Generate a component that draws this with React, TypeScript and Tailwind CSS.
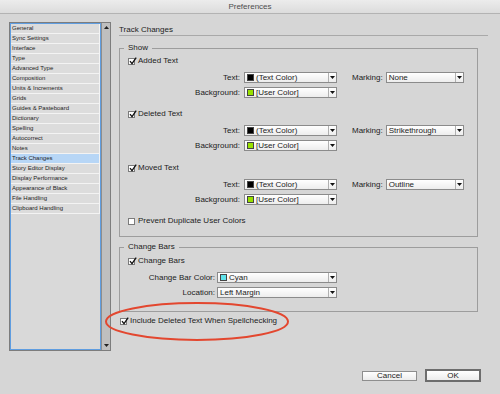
import React from "react";

const PANES = [
  "General",
  "Sync Settings",
  "Interface",
  "Type",
  "Advanced Type",
  "Composition",
  "Units & Increments",
  "Grids",
  "Guides & Pasteboard",
  "Dictionary",
  "Spelling",
  "Autocorrect",
  "Notes",
  "Track Changes",
  "Story Editor Display",
  "Display Performance",
  "Appearance of Black",
  "File Handling",
  "Clipboard Handling",
];

const Check = ({ checked }: { checked?: boolean }) => (
  <span className="relative block w-[7px] h-[7px] shrink-0 border border-[#7b7b7b] bg-white">
    {checked && (
      <svg
        className="absolute left-[0px] top-[-2px]"
        width="8"
        height="8"
        viewBox="0 0 8 8"
      >
        <path d="M1 4.2 L3 6.6 L7.2 0.6" stroke="#111" strokeWidth="1.3" fill="none" />
      </svg>
    )}
  </span>
);

const CheckRow = ({
  label,
  checked,
  className = "",
}: {
  label: string;
  checked?: boolean;
  className?: string;
}) => (
  <div className={`flex items-center gap-[3px] h-[10px] ${className}`}>
    <Check checked={checked} />
    <span className="leading-[10px]">{label}</span>
  </div>
);

const Select = ({
  value,
  swatch,
  className,
}: {
  value: string;
  swatch?: string;
  className: string;
}) => (
  <div
    className={`flex h-[11px] border border-[#8b8b8b] bg-gradient-to-b from-white to-[#ededed] ${className}`}
  >
    <div className="flex flex-1 items-center gap-[2px] pl-[2px] overflow-hidden">
      {swatch && (
        <span className={`block w-[7px] h-[7px] shrink-0 border border-[#444] ${swatch}`} />
      )}
      <span className="leading-[9px] whitespace-nowrap">{value}</span>
    </div>
    <div className="flex w-[8px] items-center justify-center border-l border-[#b0b0b0]">
      <svg width="5" height="3" viewBox="0 0 5 3">
        <path d="M0 0 H5 L2.5 3 Z" fill="#111" />
      </svg>
    </div>
  </div>
);

const Field = ({
  label,
  labelW,
  children,
  className = "",
}: {
  label: string;
  labelW: string;
  children: React.ReactNode;
  className?: string;
}) => (
  <div className={`flex items-center h-[11px] ${className}`}>
    <span className={`${labelW} shrink-0 text-right leading-[10px]`}>{label}</span>
    {children}
  </div>
);

const Marking = ({ value }: { value: string }) => (
  <>
    <span className="ml-[15px] mr-[3px] leading-[10px]">Marking:</span>
    <Select value={value} className="w-[78px]" />
  </>
);

const Section = ({
  title,
  marking,
  className = "",
}: {
  title: string;
  marking: string;
  className?: string;
}) => (
  <div className={className}>
    <CheckRow label={title} checked />
    <Field label="Text:" labelW="w-[116px] pr-[4px]" className="mt-[6px]">
      <Select value="(Text Color)" swatch="bg-black" className="w-[93px]" />
      <Marking value={marking} />
    </Field>
    <Field label="Background:" labelW="w-[116px] pr-[4px]" className="mt-[4px]">
      <Select value="[User Color]" swatch="bg-[#98e000]" className="w-[93px]" />
    </Field>
  </div>
);

export default function App() {
  return (
    <div className="relative w-[500px] h-[394px] overflow-hidden bg-[#d6d6d6] text-[8px] text-[#1c1c1c] font-['Liberation_Sans',Arial,sans-serif]">
      <div className="flex h-[14px] items-center justify-center border-b border-[#b3b3b3] bg-gradient-to-b from-[#ececec] to-[#dcdcdc] text-[#4d4d4d]">
        Preferences
      </div>

      <div className="flex pt-[8px] pl-[9px]">
        <div className="flex w-[102px] h-[329px] border border-[#7d7d7d]">
          <ul className="flex-1 border border-[#5f9de0] bg-[#d9d9d9] text-[6px]">
            {PANES.map((p) => (
              <li
                key={p}
                className={`h-[10px] pl-[1px] leading-[9px] border-b border-r border-[#f3f3f3] whitespace-nowrap ${
                  p === "Track Changes" ? "bg-[#b7d6f6]" : "bg-[#dcdcdc]"
                }`}
              >
                {p}
              </li>
            ))}
          </ul>
          <div className="flex w-[9px] flex-col items-center justify-between border-l border-[#8d8d8d] bg-[#bfbfbf] py-[3px]">
            <svg width="5" height="3" viewBox="0 0 5 3">
              <path d="M0 3 H5 L2.5 0 Z" fill="#222" />
            </svg>
            <svg width="5" height="3" viewBox="0 0 5 3">
              <path d="M0 0 H5 L2.5 3 Z" fill="#222" />
            </svg>
          </div>
        </div>

        <div className="ml-[8px] w-[369px]">
          <div className="mt-[3px] h-[11px] border-b border-[#a9a9a9] leading-[10px]">
            Track Changes
          </div>

          <fieldset className="mt-[7px] w-[359px] border border-[#9d9d9d] pb-[10px]">
            <legend className="ml-[4px] px-[4px] leading-[10px]">Show</legend>
            <div className="px-[8px]">
              <Section title="Added Text" marking="None" className="mt-[3px]" />
              <Section title="Deleted Text" marking="Strikethrough" className="mt-[11px]" />
              <Section title="Moved Text" marking="Outline" className="mt-[12px]" />
              <CheckRow label="Prevent Duplicate User Colors" className="mt-[11px]" />
            </div>
          </fieldset>

          <fieldset className="mt-[5px] w-[359px] border border-[#9d9d9d] pb-[13px]">
            <legend className="ml-[4px] px-[4px] leading-[10px]">Change Bars</legend>
            <div className="px-[8px]">
              <CheckRow label="Change Bars" checked className="mt-[4px]" />
              <Field label="Change Bar Color:" labelW="w-[89px] pr-[2px]" className="mt-[6px]">
                <Select value="Cyan" swatch="bg-[#5fe3ea]" className="w-[120px]" />
              </Field>
              <Field label="Location:" labelW="w-[89px] pr-[2px]" className="mt-[4px]">
                <Select value="Left Margin" className="w-[120px]" />
              </Field>
            </div>
          </fieldset>

          <CheckRow
            label="Include Deleted Text When Spellchecking"
            checked
            className="mt-[4px] ml-[1px]"
          />
        </div>
      </div>

      <div className="mt-[18px] flex h-[13px] items-center justify-end gap-[8px] pr-[19px]">
        <button className="h-[10px] w-[55px] border border-[#8e8e8e] bg-gradient-to-b from-white to-[#ececec] leading-[8px]">
          Cancel
        </button>
        <button className="h-[13px] w-[56px] border-2 border-[#6d6d6d] bg-gradient-to-b from-white to-[#ececec] leading-[9px]">
          OK
        </button>
      </div>

      <svg
        className="pointer-events-none absolute left-0 top-0"
        width="500"
        height="394"
        viewBox="0 0 500 394"
      >
        <ellipse cx="197" cy="321.5" rx="91" ry="18.5" fill="none" stroke="#e3472f" strokeWidth="2" />
      </svg>
    </div>
  );
}
